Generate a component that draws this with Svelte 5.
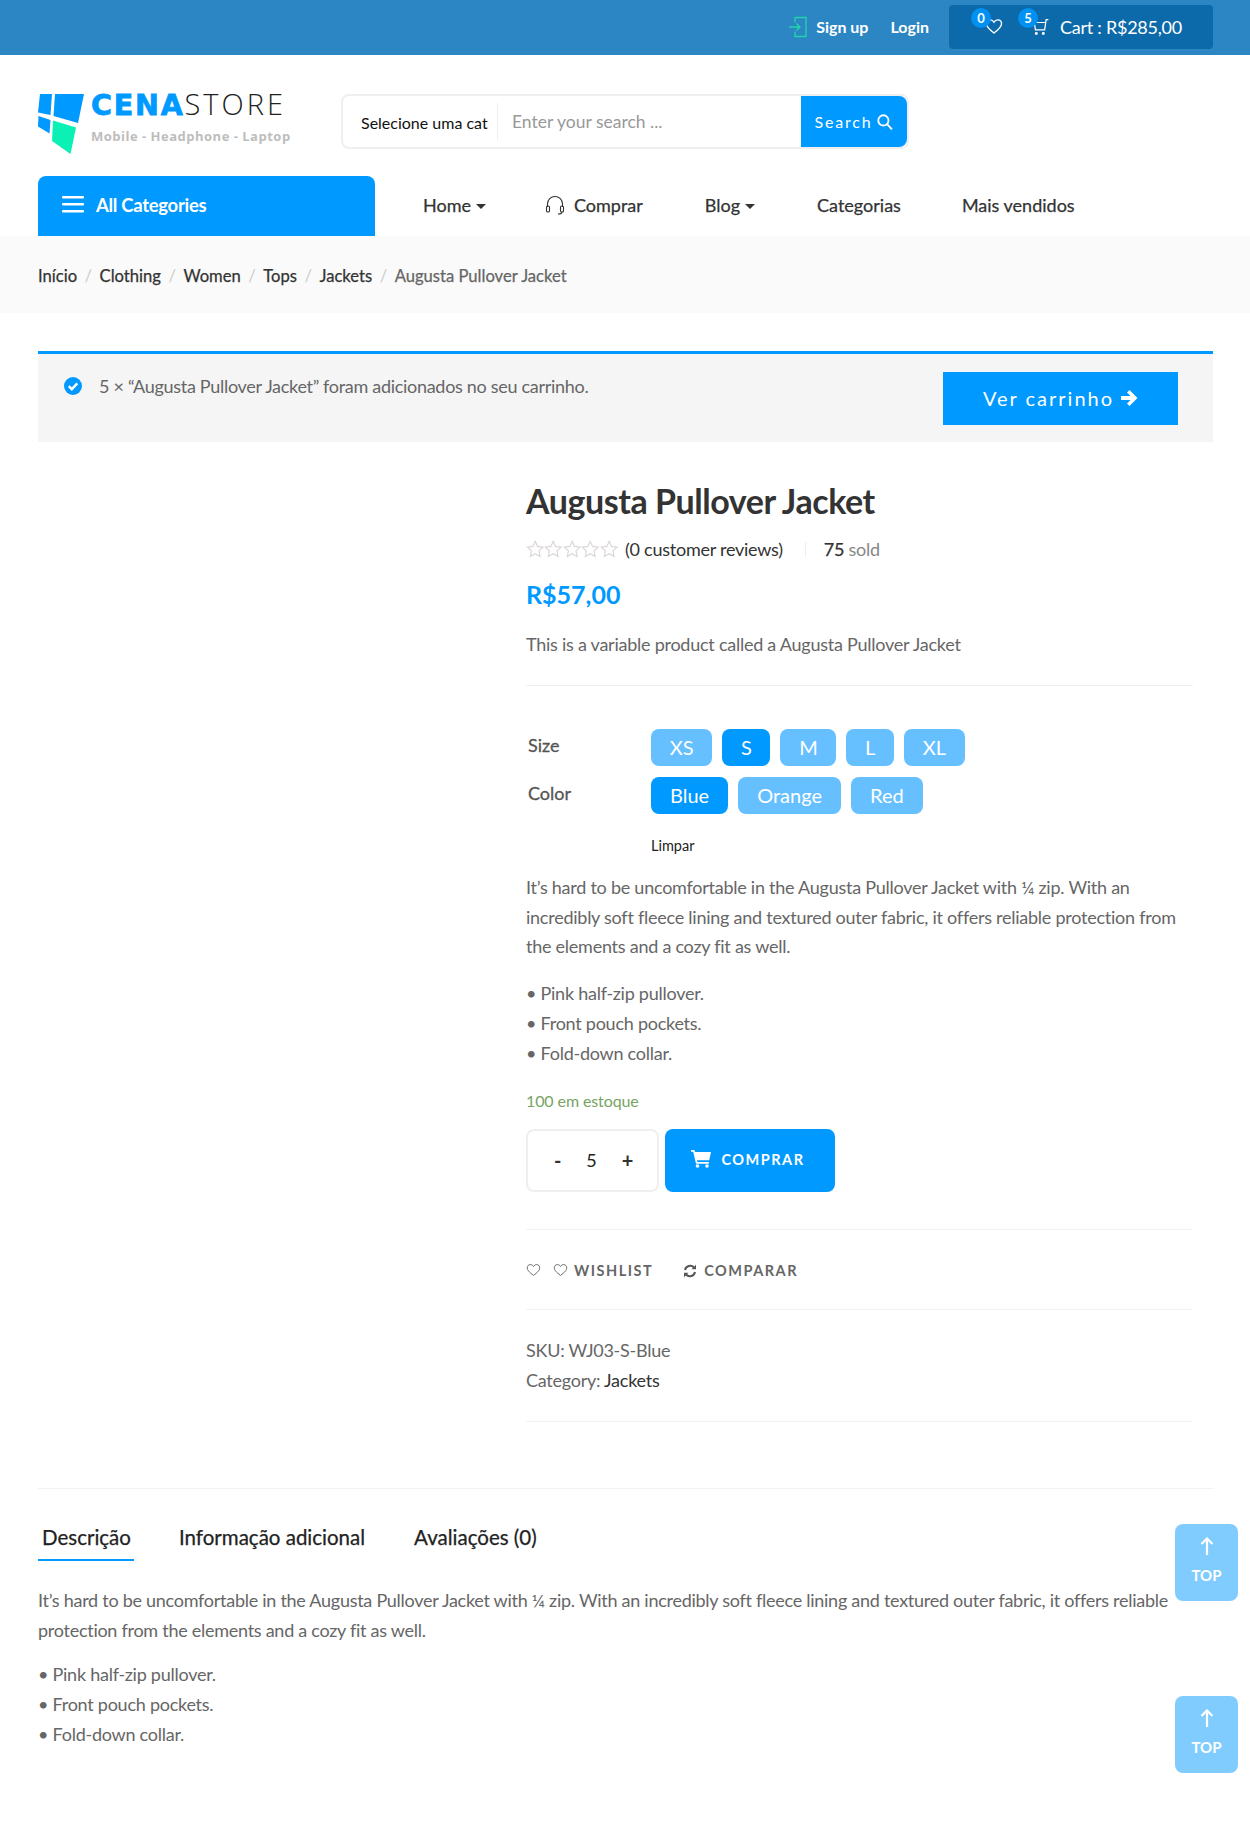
<script lang="ts">
  const crumbs = ['Início', 'Clothing', 'Women', 'Tops', 'Jackets'];
  const sizes = [
    { label: 'XS' },
    { label: 'S', active: true },
    { label: 'M' },
    { label: 'L' },
    { label: 'XL' }
  ];
  const colors = [{ label: 'Blue', active: true }, { label: 'Orange' }, { label: 'Red' }];
  const bullets = ['Pink half-zip pullover.', 'Front pouch pockets.', 'Fold-down collar.'];
  const stars = [0, 1, 2, 3, 4];
  const starPath = 'M8 1.2l2.1 4.5 4.9.6-3.6 3.4.9 4.9L8 12.2l-4.3 2.4.9-4.9L1 6.3l4.9-.6z';
  const heartPath = 'M7 12.4C3 9.4.8 7.3.8 4.8.8 2.9 2.2 1.6 3.9 1.6c1.3 0 2.4.7 3.1 1.9.7-1.2 1.8-1.9 3.1-1.9 1.7 0 3.1 1.3 3.1 3.2 0 2.5-2.2 4.6-6.2 7.6z';
</script>

<div class="page">
  <header class="topbar">
    <a class="toplink signup" href="#signup">
      <svg width="20" height="22" viewBox="0 0 20 22" fill="none" stroke="#1fd8a8" stroke-width="1.3">
        <path d="M7 1.5h11v19H7v-5M7 6.5v-5M1 11h11M8.5 7.5l3.5 3.500-3.500 3.500" />
      </svg>
      Sign up
    </a>
    <a class="toplink login" href="#login">Login</a>
    <div class="cartbox">
      <span class="iconwrap heartwrap">
        <b class="badge">0</b>
        <svg width="18" height="17" viewBox="0 0 14 14" fill="none" stroke="#fff" stroke-width="1.100"><path d={heartPath} /></svg>
      </span>
      <span class="iconwrap cartwrap">
        <b class="badge">5</b>
        <svg width="17" height="18" viewBox="0 0 15 16" fill="none" stroke="#fff" stroke-width="1.100">
          <path d="M14.500 1.500h-2l-1.300 9H3L2 4h10.300" />
          <circle cx="3.800" cy="13.800" r="1.300" fill="#fff" stroke="none" />
          <circle cx="10" cy="13.800" r="1.300" fill="#fff" stroke="none" />
        </svg>
      </span>
      <span class="carttotal">Cart : R$285,00</span>
    </div>
  </header>

  <div class="brandrow">
    <a class="logo" href="#home">
      <svg width="46" height="60" viewBox="0 0 46 60">
        <path d="M2 0h12l-1.500 21L0 18.500z" fill="#0099ff" />
        <path d="M17 0h29l-6 29-24.500-7z" fill="#0099ff" />
        <path d="M.5 22l12 4-1 13.500L0 32.500z" fill="#0099ff" />
        <path d="M15 26.500l23 7-5.500 26.500L14 47z" fill="#0bf0b5" />
      </svg>
      <div class="logotext">
        <div class="wordmark"><b>CENA</b><span>STORE</span></div>
        <div class="tagline">Mobile - Headphone - Laptop</div>
      </div>
    </a>
    <form class="search">
      <span class="catselect">Selecione uma cat</span>
      <span class="searchinput">Enter your search ...</span>
      <button type="button" class="searchbtn">
        Search
        <svg width="16" height="16" viewBox="0 0 15 15" fill="none" stroke="#fff" stroke-width="1.700"><circle cx="6" cy="6" r="4.800" /><path d="M9.500 9.500l4.500 5" /></svg>
      </button>
    </form>
  </div>

  <nav class="navrow">
    <div class="allcats">
      <svg width="22" height="17" viewBox="0 0 22 17" fill="#fff"><rect width="22" height="2.400" rx="1" /><rect y="7" width="22" height="2.400" rx="1" /><rect y="14" width="22" height="2.400" rx="1" /></svg>
      All Categories
    </div>
    <a class="navlink home" href="#home">Home <i class="caret"></i></a>
    <a class="navlink buy" href="#buy">
      <svg width="20" height="20" viewBox="0 0 20 20" fill="none" stroke="#333" stroke-width="1.100">
        <path d="M2.500 12V9a7.500 7.500 0 0 1 15 0v3" />
        <rect x="1.500" y="11" width="3" height="6" rx="1.300" />
        <rect x="15.500" y="11" width="3" height="6" rx="1.300" />
        <path d="M17 17c0 1.500-2 2-4 2" />
      </svg>
      Comprar
    </a>
    <a class="navlink blog" href="#blog">Blog <i class="caret"></i></a>
    <a class="navlink cats" href="#cats">Categorias</a>
    <a class="navlink best" href="#best">Mais vendidos</a>
  </nav>

  <div class="breadcrumb">
    {#each crumbs as crumb}
      <a href="#crumb">{crumb}</a><span class="sep">/</span>
    {/each}
    <span class="current">Augusta Pullover Jacket</span>
  </div>

  <main class="content">
    <div class="notice">
      <svg class="noticeicon" width="18" height="18" viewBox="0 0 18 18">
        <circle cx="9" cy="9" r="9" fill="#0099ff" />
        <path d="M4.800 9.200l3 3 5.500-5.800" fill="none" stroke="#fff" stroke-width="2.400" />
      </svg>
      <p>5 × “Augusta Pullover Jacket” foram adicionados no seu carrinho.</p>
      <a class="viewcart" href="#cart">
        Ver carrinho
        <svg width="18" height="18" viewBox="0 0 18 18" fill="#fff"><path d="M9.500 1l8 8-8 8-2.500-2.500 3.500-3.600H1V7.100h9.500L7 3.500z" /></svg>
      </a>
    </div>

    <section class="product">
      <div class="gallery"></div>
      <div class="summary">
        <h1>Augusta Pullover Jacket</h1>
        <div class="ratingrow">
          <span class="stars">
            {#each stars as s}
              <svg width="19" height="18" viewBox="0 0 16 16" fill="none" stroke="#d9d4d8" stroke-width="1"><path d={starPath} /></svg>
            {/each}
          </span>
          <span class="reviews">(0 customer reviews)</span>
          <span class="sold"><b>75</b> sold</span>
        </div>
        <div class="price">R$57,00</div>
        <p class="short">This is a variable product called a Augusta Pullover Jacket</p>

        <div class="variations">
          <div class="varlabel">Size</div>
          <div class="swatches sizes">
            {#each sizes as o}
              <span class="swatch" class:active={o.active}>{o.label}</span>
            {/each}
          </div>
          <div class="varlabel">Color</div>
          <div class="swatches">
            {#each colors as o}
              <span class="swatch" class:active={o.active}>{o.label}</span>
            {/each}
          </div>
          <div></div>
          <a class="clear" href="#clear">Limpar</a>
        </div>

        <div class="desc">
          <p>It’s hard to be uncomfortable in the Augusta Pullover Jacket with ¼ zip. With an incredibly soft fleece lining and textured outer fabric, it offers reliable protection from the elements and a cozy fit as well.</p>
          <ul>
            {#each bullets as b}
              <li>• {b}</li>
            {/each}
          </ul>
        </div>

        <div class="stock">100 em estoque</div>

        <div class="buyrow">
          <div class="qty"><b>-</b><span>5</span><b>+</b></div>
          <button type="button" class="addcart">
            <svg width="20" height="18" viewBox="0 0 20 18" fill="#fff">
              <path d="M0 0h3.500l.6 2H20l-1.800 8.200H6l.4 1.800h11.400v1.800H5L2.200 1.800H0z" />
              <circle cx="6.500" cy="16" r="1.800" /><circle cx="16" cy="16" r="1.800" />
            </svg>
            COMPRAR
          </button>
        </div>

        <div class="actions">
          <svg width="15" height="14" viewBox="0 0 14 14" fill="none" stroke="#666" stroke-width="1"><path d={heartPath} /></svg>
          <a class="wish" href="#wish">
            <svg width="15" height="14" viewBox="0 0 14 14" fill="none" stroke="#666" stroke-width="1"><path d={heartPath} /></svg>
            WISHLIST
          </a>
          <a class="compare" href="#compare">
            <svg width="14" height="14" viewBox="0 0 14 14" fill="none" stroke="#555" stroke-width="2">
              <path d="M2 6a5.200 5.200 0 0 1 9-2.500M12 8a5.200 5.200 0 0 1-9 2.500" />
              <path d="M13 .8v4.400H8.600zM1 13.200V8.800h4.400z" fill="#555" stroke="none" />
            </svg>
            COMPARAR
          </a>
        </div>

        <div class="meta">
          <div>SKU: WJ03-S-Blue</div>
          <div>Category: <a href="#jackets">Jackets</a></div>
        </div>
      </div>
    </section>

    <section class="tabs">
      <div class="tablist">
        <span class="tab active">Descrição</span>
        <span class="tab">Informação adicional</span>
        <span class="tab">Avaliações (0)</span>
      </div>
      <p>It’s hard to be uncomfortable in the Augusta Pullover Jacket with ¼ zip. With an incredibly soft fleece lining and textured outer fabric, it offers reliable protection from the elements and a cozy fit as well.</p>
      <ul>
        {#each bullets as b}
          <li>• {b}</li>
        {/each}
      </ul>
    </section>
  </main>

  <a class="totop first" href="#top">
    <svg width="14" height="18" viewBox="0 0 14 18" fill="none" stroke="#fff" stroke-width="2.200"><path d="M7 18V1.500M1.500 7L7 1.500 12.500 7" /></svg>
    TOP
  </a>
  <a class="totop second" href="#top">
    <svg width="14" height="18" viewBox="0 0 14 18" fill="none" stroke="#fff" stroke-width="2.200"><path d="M7 18V1.500M1.500 7L7 1.500 12.500 7" /></svg>
    TOP
  </a>
</div>

<style>
  :global(body) {
    margin: 0;
    background: #fff;
  }

  .page {
    position: relative;
    height: 1822px;
    overflow: hidden;
    font-family: Lato, "Liberation Sans", sans-serif;
    font-size: 18px;
    letter-spacing: -0.25px;
    color: #666;
  }

  a {
    color: inherit;
    text-decoration: none;
  }

  p,
  ul,
  h1 {
    margin: 0;
    padding: 0;
  }

  ul {
    list-style: none;
  }

  /* top bar */
  .topbar {
    height: 55px;
    background: #2b86c3;
    display: flex;
    align-items: center;
    justify-content: flex-end;
    padding: 0 37px 2px 0;
    box-sizing: border-box;
  }

  .toplink {
    display: flex;
    align-items: center;
    gap: 8px;
    color: #fff;
    font-size: 16px;
    font-weight: 700;
    letter-spacing: 0;
  }

  .login {
    margin-left: 22px;
    margin-right: 20px;
  }

  .cartbox {
    width: 264px;
    height: 44px;
    box-sizing: border-box;
    background: #0c6aab;
    border-radius: 4px;
    display: flex;
    align-items: center;
    color: #fff;
    font-size: 18px;
    padding-left: 36px;
  }

  .iconwrap {
    position: relative;
    display: flex;
  }

  .cartwrap {
    margin-left: 29px;
  }

  .badge {
    position: absolute;
    left: -14px;
    top: -10px;
    width: 20px;
    height: 20px;
    line-height: 20px;
    border-radius: 50%;
    background: #0091f2;
    font-size: 13px;
    text-align: center;
  }

  .carttotal {
    margin-left: 11px;
  }

  /* logo and search */
  .brandrow {
    display: flex;
    padding: 39px 0 0 38px;
    height: 121px;
    box-sizing: border-box;
  }

  .logo {
    display: flex;
    gap: 7px;
    width: 303px;
    height: 60px;
  }

  .wordmark {
    height: 22px;
    line-height: 20px;
    white-space: nowrap;
  }

  .wordmark b {
    font-family: "DejaVu Sans", sans-serif;
    font-weight: 700;
    color: #0099ff;
    font-size: 28.500px;
    letter-spacing: 1.800px;
    -webkit-text-stroke: 0.8px #0099ff;
  }

  .wordmark span {
    font-family: "Open Sans", Lato, sans-serif;
    font-weight: 300;
    font-size: 29px;
    letter-spacing: 3px;
    color: #222;
  }

  .tagline {
    font-family: "Open Sans", sans-serif;
    font-weight: 700;
    font-size: 13px;
    color: #bdbdbd;
    letter-spacing: 0.5px;
    line-height: 18px;
    margin-top: 11px;
    white-space: nowrap;
  }

  .search {
    width: 568px;
    height: 55px;
    box-sizing: border-box;
    border: 2px solid #efefef;
    border-radius: 8px;
    display: flex;
    align-items: center;
    margin: 0;
    background: #fff;
    letter-spacing: 0;
  }

  .catselect {
    width: 155px;
    flex: none;
    box-sizing: border-box;
    padding-left: 18px;
    font-size: 16px;
    color: #111;
    height: 37px;
    line-height: 39px;
    border-right: 1px solid #efefef;
    white-space: nowrap;
    overflow: hidden;
  }

  .searchinput {
    flex: 1;
    padding-left: 14px;
    font-size: 17.500px;
    color: #999;
  }

  .searchbtn {
    width: 106px;
    height: 51px;
    border: 0;
    background: #0099ff;
    color: #fff;
    border-radius: 0 8px 8px 0;
    font-family: inherit;
    font-size: 16px;
    letter-spacing: 1.800px;
    display: flex;
    align-items: center;
    justify-content: center;
    gap: 5px;
  }

  /* nav */
  .navrow {
    display: flex;
    align-items: center;
    height: 60px;
    padding-left: 38px;
    color: #333;
    letter-spacing: 0;
  }

  .allcats {
    width: 337px;
    height: 60px;
    box-sizing: border-box;
    background: #0099ff;
    border-radius: 8px 8px 0 0;
    color: #fff;
    font-size: 18.500px;
    font-weight: 700;
    letter-spacing: -0.3px;
    display: flex;
    align-items: center;
    gap: 12px;
    padding: 0 0 3px 24px;
  }

  .navlink {
    display: flex;
    align-items: center;
    gap: 5px;
    font-size: 18px;
    color: #333;
    padding-bottom: 2px;
    -webkit-text-stroke: 0.25px #333;
  }

  .home { margin-left: 48px; }
  .buy { margin-left: 59px; gap: 9px; }
  .blog { margin-left: 62px; }
  .cats { margin-left: 62px; }
  .best { margin-left: 61px; }

  .caret {
    width: 0;
    height: 0;
    margin-top: 3px;
    border-left: 5px solid transparent;
    border-right: 5px solid transparent;
    border-top: 5px solid #333;
  }

  /* breadcrumb */
  .breadcrumb {
    height: 77px;
    box-sizing: border-box;
    background: #fafafa;
    display: flex;
    align-items: center;
    padding: 2px 0 0 38px;
    font-size: 16.600px;
    letter-spacing: 0;
    color: #333;
    -webkit-text-stroke: 0.25px #333;
  }

  .sep {
    color: #ccc;
    margin: 0 7.500px;
    -webkit-text-stroke: 0;
  }

  .current {
    color: #666;
    -webkit-text-stroke: 0.25px #666;
  }

  /* content */
  .content {
    padding: 38px 37px 0 38px;
  }

  .notice {
    height: 91px;
    box-sizing: border-box;
    border-top: 3px solid #0099ff;
    background: #f5f5f5;
    display: flex;
    padding: 20px 35px 0 26px;
  }

  .noticeicon {
    margin-top: 3px;
    flex: none;
  }

  .notice p {
    flex: 1;
    margin-left: 17px;
    line-height: 24px;
    letter-spacing: -0.3px;
  }

  .viewcart {
    width: 235px;
    height: 53px;
    margin-top: -2px;
    padding-bottom: 2px;
    box-sizing: border-box;
    background: #0099ff;
    color: #fff;
    font-size: 20px;
    letter-spacing: 2px;
    display: flex;
    align-items: center;
    justify-content: center;
    gap: 6px;
  }

  .product {
    display: flex;
  }

  .gallery {
    width: 488px;
    flex: none;
  }

  .summary {
    flex: 1;
    padding-right: 20px;
  }

  h1 {
    margin-top: 37px;
    font-size: 34px;
    line-height: 44px;
    font-weight: 700;
    color: #333;
    letter-spacing: -0.45px;
  }

  .ratingrow {
    display: flex;
    align-items: center;
    height: 24px;
    margin-top: 14px;
    color: #333;
  }

  .stars {
    display: flex;
    margin-right: 7px;
    width: 92px;
  }

  .sold {
    margin-left: 41px;
    color: #888;
    position: relative;
  }

  .sold b {
    font-weight: 400;
    color: #333;
    -webkit-text-stroke: 0.25px #333;
  }

  .sold::before {
    content: "";
    position: absolute;
    left: -19px;
    top: 4px;
    height: 15px;
    width: 1px;
    background: #eee;
  }

  .price {
    margin-top: 18px;
    font-size: 25px;
    line-height: 30px;
    font-weight: 700;
    color: #0099ff;
    letter-spacing: 0;
  }

  .short {
    margin-top: 23px;
    padding-bottom: 29px;
    border-bottom: 1px solid #f0f0f0;
    line-height: 24px;
  }

  .variations {
    display: grid;
    grid-template-columns: 123px 1fr;
    row-gap: 11px;
    margin-top: 43px;
    padding-left: 2px;
  }

  .varlabel {
    font-size: 18px;
    letter-spacing: 0;
    line-height: 32px;
    color: #555;
    -webkit-text-stroke: 0.3px #555;
  }

  .swatches {
    display: flex;
    gap: 10px;
  }

  .swatch {
    height: 37px;
    line-height: 37px;
    padding: 0 19px;
    border-radius: 8px;
    background: #66bfff;
    color: #fff;
    font-size: 20px;
    letter-spacing: 0;
  }

  .sizes .swatch {
    padding: 0 18.700px;
  }

  .swatch.active {
    background: #0099ff;
  }

  .clear {
    margin-top: 12px;
    font-size: 14.500px;
    letter-spacing: 0;
    line-height: 18px;
    color: #222;
  }

  .desc {
    margin-top: 18px;
    line-height: 29.600px;
  }

  .desc ul {
    margin-top: 16px;
    line-height: 30px;
  }

  .stock {
    margin-top: 21px;
    font-size: 16px;
    letter-spacing: -0.1px;
    line-height: 24px;
    color: #77a464;
  }

  .buyrow {
    display: flex;
    gap: 6px;
    margin-top: 16px;
    padding-bottom: 37px;
    border-bottom: 1px solid #f2f2f2;
  }

  .qty {
    width: 133px;
    height: 63px;
    box-sizing: border-box;
    border: 2px solid #efefef;
    border-radius: 8px;
    display: flex;
    align-items: center;
    justify-content: space-between;
    padding: 0 24px 0 26px;
    color: #222;
    font-size: 18px;
  }

  .qty b {
    font-size: 20px;
    color: #333;
  }

  .addcart {
    width: 170px;
    height: 63px;
    padding: 0 5px 2px 0;
    border: 0;
    border-radius: 8px;
    background: #0099ff;
    color: #fff;
    font-family: inherit;
    font-size: 14.500px;
    font-weight: 700;
    letter-spacing: 1.500px;
    display: flex;
    align-items: center;
    justify-content: center;
    gap: 11px;
  }

  .actions {
    display: flex;
    align-items: center;
    gap: 12px;
    height: 80px;
    box-sizing: border-box;
    padding-top: 2px;
    border-bottom: 1px solid #f2f2f2;
    font-size: 14.500px;
    font-weight: 700;
    letter-spacing: 1.500px;
    color: #666;
  }

  .wish,
  .compare {
    display: flex;
    align-items: center;
    gap: 6px;
  }

  .compare {
    margin-left: 18px;
    margin-top: 1px;
    gap: 7px;
  }

  .meta {
    padding: 25px 0 26px;
    border-bottom: 1px solid #f2f2f2;
    line-height: 30px;
  }

  .meta a {
    color: #333;
  }

  .tabs {
    margin-top: 66px;
    border-top: 1px solid #f2f2f2;
    line-height: 30px;
  }

  .tabs p {
    letter-spacing: -0.27px;
  }

  .tablist {
    display: flex;
    margin-top: 26px;
    margin-bottom: 24px;
  }

  .tab {
    font-size: 20.500px;
    letter-spacing: 0;
    line-height: 44px;
    color: #222;
    margin-right: 49px;
    -webkit-text-stroke: 0.25px #222;
  }

  .tab.active {
    padding: 0 4px;
    width: 88px;
    border-bottom: 2px solid #0099ff;
    margin-right: 45px;
  }

  .tabs ul {
    margin-top: 14px;
  }

  .totop {
    position: absolute;
    left: 1175px;
    width: 63px;
    height: 77px;
    box-sizing: border-box;
    padding-top: 13px;
    background: #80ccff;
    border-radius: 8px;
    color: #fff;
    font-size: 15px;
    letter-spacing: 0;
    font-weight: 700;
    display: flex;
    flex-direction: column;
    align-items: center;
    gap: 11px;
  }

  .first { top: 1524px; }
  .second { top: 1696px; }
</style>
